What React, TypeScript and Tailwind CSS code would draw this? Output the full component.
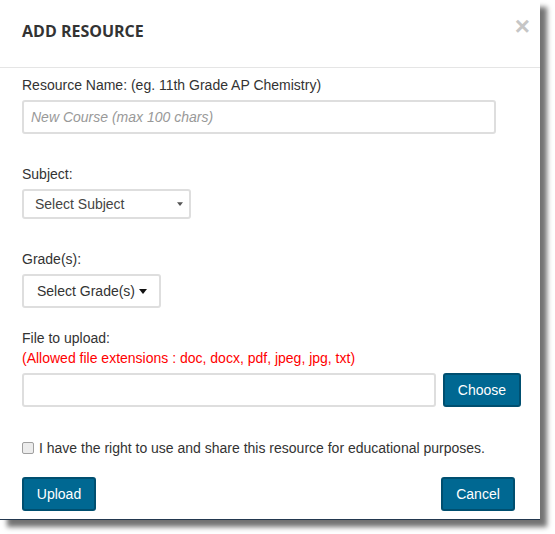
import { useState } from "react";

const EXTENSIONS = ["doc", "docx", "pdf", "jpeg", "jpg", "txt"];

function Caret({ className, w = 8, h = 5 }: { className?: string; w?: number; h?: number }) {
  return (
    <svg width={w} height={h} viewBox="0 0 8 5" className={className}>
      <path d="M0 0 L8 0 L4 5 Z" fill="currentColor" />
    </svg>
  );
}

export default function App() {
  const [agreed, setAgreed] = useState(false);

  return (
    <div className="h-[534px] w-[555px] bg-white font-['Liberation_Sans',Arial,sans-serif] text-[14px] leading-[20px] text-[#333]">
      <div className="flex h-[520px] w-[540px] flex-col border-b border-[#23384f] bg-white shadow-[7px_7px_5px_rgba(0,0,0,0.55)]">
        {/* header */}
        <div className="flex h-[68px] items-start justify-between border-b border-[#e5e5e5] pl-[22px] pr-[10px] pt-[19px]">
          <h1 className="font-['Open_Sans',sans-serif] text-[16px] font-bold leading-[24px] text-[#333]">
            ADD RESOURCE
          </h1>
          <button
            aria-label="Close"
            className="-mt-[5px] font-['Liberation_Sans',Arial,sans-serif] text-[26px] font-bold leading-[24px] text-[#c6c6c6]"
          >
            ×
          </button>
        </div>

        {/* body */}
        <div className="flex flex-1 flex-col pl-[22px] pr-[19px] pt-[7px]">
          <label>Resource Name: (eg. 11th Grade AP Chemistry)</label>
          <input
            placeholder="New Course (max 100 chars)"
            className="mt-[5px] h-[34px] w-[474px] rounded-[3px] border-2 border-[#dedede] px-[7px] italic text-[#555] placeholder:text-[#999] focus:outline-none"
          />

          <label className="mt-[30px]">Subject:</label>
          <div className="mt-[5px] flex h-[30px] w-[169px] items-center justify-between rounded-[3px] border-2 border-[#dedede] pl-[11px] pr-[6px] text-[#444]">
            <span>Select Subject</span>
            <Caret className="text-[#555]" w={6} h={6} />
          </div>

          <label className="mt-[30px]">Grade(s):</label>
          <button className="mt-[5px] flex h-[34px] w-[139px] items-center gap-[4px] rounded-[3px] border-2 border-[#dedede] pl-[13px] text-[#333]">
            <span>Select Grade(s)</span>
            <Caret className="mt-[1px] text-[#111]" />
          </button>

          <label className="mt-[20px]">File to upload:</label>
          <div className="text-[#ff0000]">
            (Allowed file extensions : {EXTENSIONS.join(", ")})
          </div>
          <div className="mt-[5px] flex gap-[7px]">
            <input className="h-[34px] w-[414px] rounded-[3px] border-2 border-[#dedede] px-[7px] focus:outline-none" />
            <button className="h-[34px] w-[78px] rounded-[3px] border-2 border-[#004f70] bg-[#006892] text-white">
              Choose
            </button>
          </div>

          <label className="mt-[31px] flex items-center gap-[5px]">
            <input
              type="checkbox"
              checked={agreed}
              onChange={(e) => setAgreed(e.target.checked)}
              className="m-0 h-[12px] w-[12px] appearance-none rounded-[2px] border border-[#a0a0a0] bg-[#ececec] checked:bg-[#006892]"
            />
            <span>I have the right to use and share this resource for educational purposes.</span>
          </label>

          <div className="mt-[19px] flex justify-between pr-[6px]">
            <button className="h-[34px] w-[74px] rounded-[3px] border-2 border-[#004f70] bg-[#006892] text-white">
              Upload
            </button>
            <button className="h-[34px] w-[74px] rounded-[3px] border-2 border-[#004f70] bg-[#006892] text-white">
              Cancel
            </button>
          </div>
        </div>
      </div>
    </div>
  );
}
